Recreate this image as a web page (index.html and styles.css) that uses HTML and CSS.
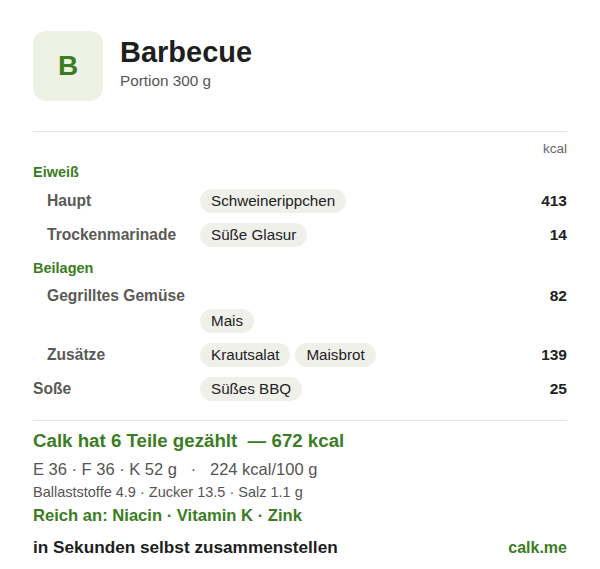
FILE: index.html
```html
<!DOCTYPE html>
<html lang="de">
  <head>
    <meta charset="UTF-8" />
    <meta name="viewport" content="width=device-width, initial-scale=1.0" />
    <title>Barbecue</title>
    <link rel="stylesheet" href="styles.css">
  </head>
  <body>
    <main class="card">
      <div class="head">
        <div class="logo">B</div>
        <div class="title">
          <h1>Barbecue</h1>
          <p>Portion 300 g</p>
        </div>
      </div>

      <div class="unit">kcal</div>

      <h3 class="group">Eiweiß</h3>
      <div class="row sub">
        <span class="label">Haupt</span>
        <div class="chips"><span class="chip">Schweinerippchen</span></div>
        <span class="kcal">413</span>
      </div>
      <div class="row sub">
        <span class="label">Trockenmarinade</span>
        <div class="chips"><span class="chip">Süße Glasur</span></div>
        <span class="kcal">14</span>
      </div>

      <h3 class="group">Beilagen</h3>
      <div class="row sub wrap">
        <span class="label">Gegrilltes Gemüse</span>
        <div class="chips"><span class="chip">Mais</span></div>
        <span class="kcal">82</span>
      </div>
      <div class="row sub">
        <span class="label">Zusätze</span>
        <div class="chips"><span class="chip">Krautsalat</span><span class="chip">Maisbrot</span></div>
        <span class="kcal">139</span>
      </div>
      <div class="row">
        <span class="label">Soße</span>
        <div class="chips"><span class="chip">Süßes BBQ</span></div>
        <span class="kcal">25</span>
      </div>

      <div class="summary">
        <h2>Calk hat 6 Teile gezählt &nbsp;— 672 kcal</h2>
        <p class="macros">E 36 · F 36 · K 52 g &nbsp; · &nbsp; 224 kcal/100 g</p>
        <p class="extra">Ballaststoffe 4.9 · Zucker 13.5 · Salz 1.1 g</p>
        <p class="rich">Reich an: Niacin · Vitamin K · Zink</p>
      </div>

      <div class="foot">
        <span>in Sekunden selbst zusammenstellen</span>
        <span class="brand">calk.me</span>
      </div>
    </main>
  </body>
</html>
```

FILE: styles.css
```css
body {
  margin: 0;
  background: #fff;
  font-family: "Liberation Sans", Arial, sans-serif;
  color: #222;
}
.card {
  padding: 31px 33px 0;
}
.head {
  display: flex;
  gap: 17px;
  padding-bottom: 30px;
  border-bottom: 1px solid #e6e6e2;
}
.logo {
  width: 70px;
  height: 70px;
  border-radius: 13px;
  background: #eef2e5;
  color: #3b7d23;
  font-size: 28px;
  font-weight: bold;
  display: flex;
  justify-content: center;
  align-items: center;
}
.title h1 {
  margin: 4px 0 0;
  font-size: 29px;
  line-height: 34px;
  color: #1e1e1e;
}
.title p {
  margin: 3px 0 0;
  font-size: 15.3px;
  line-height: 18px;
  color: #555;
}
.unit {
  text-align: right;
  font-size: 13.5px;
  color: #666;
  margin-top: 10px;
  line-height: 14px;
}
.group {
  margin: 12px 0 0;
  font-size: 14.5px;
  line-height: 18px;
  color: #3b7d23;
}
.unit + .group {
  margin-top: 7px;
}
.row {
  display: grid;
  grid-template-columns: 167px 1fr auto;
  align-items: center;
  height: 24px;
  margin-top: 8px;
}
.group + .row {
  margin-top: 8px;
}
.row + .row {
  margin-top: 10px;
}
.sub {
  padding-left: 14px;
  grid-template-columns: 153px 1fr auto;
}
.label {
  font-size: 15.6px;
  font-weight: bold;
  color: #5a5a55;
}
.chips {
  display: flex;
  gap: 5px;
}
.chip {
  background: #f0f0eb;
  border-radius: 12px;
  padding: 0 11px;
  line-height: 24px;
  font-size: 15.2px;
  color: #222;
}
.kcal {
  font-size: 15.5px;
  font-weight: bold;
  color: #222;
}
.group + .wrap {
  height: auto;
  row-gap: 1px;
  margin-top: 7px;
}
.wrap .chips {
  grid-row: 2;
  grid-column: 2;
}
.wrap .kcal {
  grid-row: 1;
  grid-column: 3;
}
.wrap .label,
.wrap .kcal {
  line-height: 24px;
}
.summary {
  margin-top: 19px;
  border-top: 1px solid #e6e6e2;
  padding-top: 9px;
}
.summary h2 {
  margin: 0;
  font-size: 18.7px;
  line-height: 22px;
  color: #3b7d23;
}
.macros {
  margin: 7px 0 0;
  font-size: 16.5px;
  line-height: 20px;
  color: #555;
}
.extra {
  margin: 4px 0 0;
  font-size: 14.5px;
  line-height: 18px;
  color: #555;
}
.rich {
  margin: 5px 0 0;
  font-size: 16.6px;
  line-height: 20px;
  font-weight: bold;
  color: #3b7d23;
}
.foot {
  display: flex;
  justify-content: space-between;
  align-items: baseline;
  margin-top: 11px;
  font-size: 17.2px;
  line-height: 20px;
  font-weight: bold;
  color: #1e1e1e;
}
.brand {
  color: #3b7d23;
  font-size: 16px;
}
```
